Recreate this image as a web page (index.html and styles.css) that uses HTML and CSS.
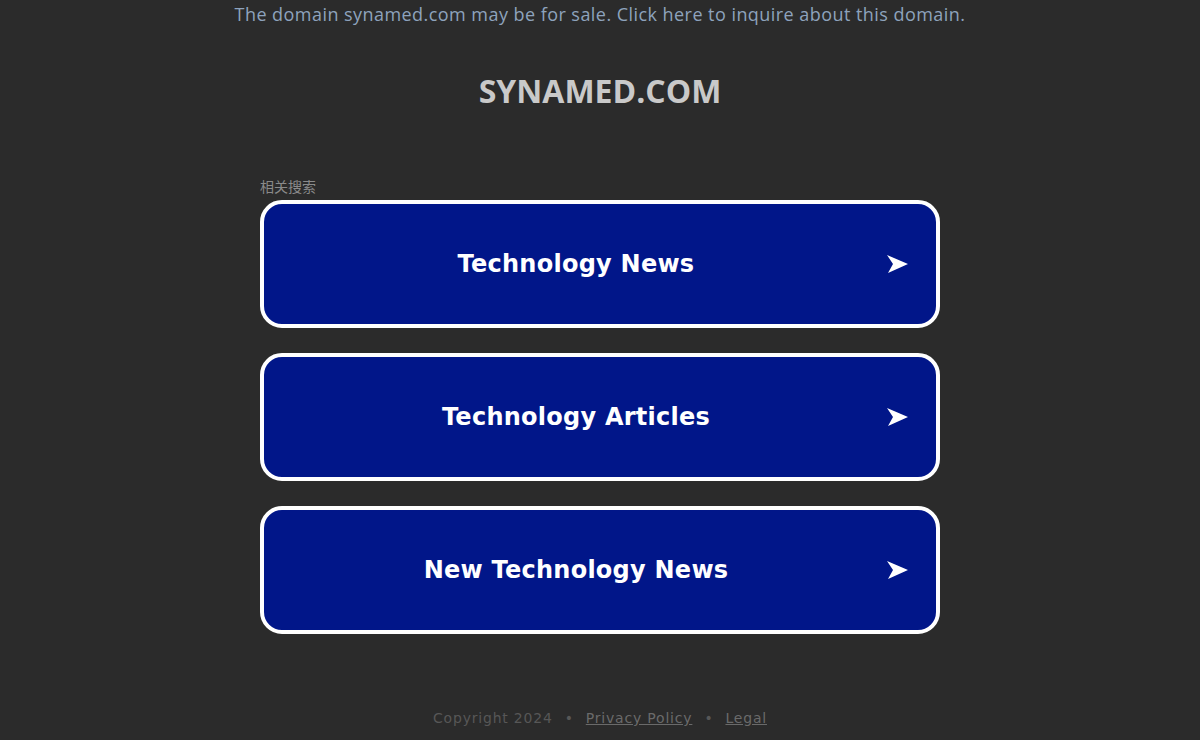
FILE: index.html
```html
<!DOCTYPE html>
<html lang="en">
<head>
<meta charset="utf-8">
<title>synamed.com</title>
<link rel="stylesheet" href="styles.css">
</head>
<body>
<div class="page">
  <div class="banner">The domain synamed.com may be for sale. Click here to inquire about this domain.</div>
  <h1 class="domain">SYNAMED.COM</h1>
  <div class="related">
    <div class="label">相关搜索</div>
    <div class="links">
      <a class="link" href="#"><span class="link-text">Technology News</span><svg class="arrow" viewBox="0 0 21 18"><polygon points="0,0 21,9 1,18 6,9" fill="#fff"/></svg></a>
      <a class="link" href="#"><span class="link-text">Technology Articles</span><svg class="arrow" viewBox="0 0 21 18"><polygon points="0,0 21,9 1,18 6,9" fill="#fff"/></svg></a>
      <a class="link" href="#"><span class="link-text">New Technology News</span><svg class="arrow" viewBox="0 0 21 18"><polygon points="0,0 21,9 1,18 6,9" fill="#fff"/></svg></a>
    </div>
  </div>
  <div class="footer">
    <span>Copyright 2024</span>
    <span class="dot">•</span>
    <a href="#" class="foot-link">Privacy Policy</a>
    <span class="dot">•</span>
    <a href="#" class="foot-link">Legal</a>
  </div>
</div>
</body>
</html>
```
FILE: styles.css
```css
html, body {
  margin: 0;
  padding: 0;
  background: #2b2b2b;
}
body {
  font-family: "Open Sans", "Noto Sans", sans-serif;
}
.page {
  width: 1200px;
  height: 740px;
  display: flex;
  flex-direction: column;
  align-items: center;
}
.banner {
  margin-top: 2px;
  font-size: 18px;
  line-height: 24px;
  color: #8ea3bd;
  letter-spacing: 0.45px;
}
.domain {
  margin: 43px 0 0 0;
  font-size: 32px;
  line-height: 44px;
  font-weight: 700;
  color: #c9c9c9;
}
.related {
  margin-top: 64px;
  width: 680px;
}
.label {
  font-family: "Noto Sans CJK SC", sans-serif;
  font-size: 14px;
  line-height: 18px;
  color: #8a8a8a;
  margin-bottom: 5px;
}
.links {
  display: flex;
  flex-direction: column;
  gap: 25px;
}
.link {
  box-sizing: border-box;
  height: 128px;
  border: 4px solid #ffffff;
  border-radius: 22px;
  background: #011689;
  display: flex;
  align-items: center;
  justify-content: center;
  position: relative;
  text-decoration: none;
  padding-right: 48px;
}
.link-text {
  font-family: "DejaVu Sans", sans-serif;
  font-weight: 700;
  font-size: 24px;
  letter-spacing: 0.25px;
  color: #ffffff;
}
.arrow {
  position: absolute;
  right: 28px;
  top: 51px;
  width: 21px;
  height: 18px;
}
.footer {
  margin-top: 76px;
  font-family: "DejaVu Sans", sans-serif;
  font-size: 14px;
  letter-spacing: 0.8px;
  color: #575757;
  display: flex;
  gap: 12px;
}
.foot-link {
  color: #6a6a6a;
  text-decoration: underline;
}
```
